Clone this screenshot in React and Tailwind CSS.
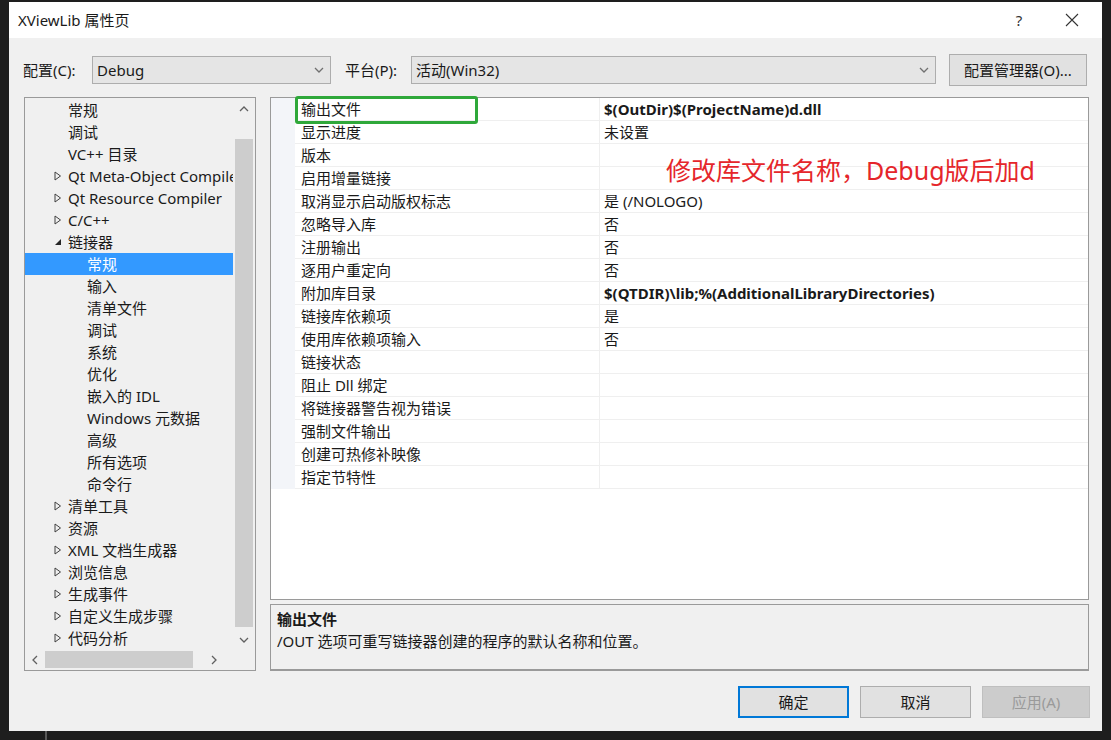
import React from 'react';

const font = { fontFamily: '"Noto Sans", "Noto Sans CJK SC", sans-serif' };

const treeRows = [
  { t: '常规', d: 0 },
  { t: '调试', d: 0 },
  { t: 'VC++ 目录', d: 0 },
  { t: 'Qt Meta-Object Compiler', d: 0, arrow: 'closed' },
  { t: 'Qt Resource Compiler', d: 0, arrow: 'closed' },
  { t: 'C/C++', d: 0, arrow: 'closed' },
  { t: '链接器', d: 0, arrow: 'open' },
  { t: '常规', d: 1, sel: true },
  { t: '输入', d: 1 },
  { t: '清单文件', d: 1 },
  { t: '调试', d: 1 },
  { t: '系统', d: 1 },
  { t: '优化', d: 1 },
  { t: '嵌入的 IDL', d: 1 },
  { t: 'Windows 元数据', d: 1 },
  { t: '高级', d: 1 },
  { t: '所有选项', d: 1 },
  { t: '命令行', d: 1 },
  { t: '清单工具', d: 0, arrow: 'closed' },
  { t: '资源', d: 0, arrow: 'closed' },
  { t: 'XML 文档生成器', d: 0, arrow: 'closed' },
  { t: '浏览信息', d: 0, arrow: 'closed' },
  { t: '生成事件', d: 0, arrow: 'closed' },
  { t: '自定义生成步骤', d: 0, arrow: 'closed' },
  { t: '代码分析', d: 0, arrow: 'closed' },
];

const props = [
  ['输出文件', '$(OutDir)$(ProjectName)d.dll', true],
  ['显示进度', '未设置'],
  ['版本', ''],
  ['启用增量链接', ''],
  ['取消显示启动版权标志', '是 (/NOLOGO)'],
  ['忽略导入库', '否'],
  ['注册输出', '否'],
  ['逐用户重定向', '否'],
  ['附加库目录', '$(QTDIR)\\lib;%(AdditionalLibraryDirectories)', true],
  ['链接库依赖项', '是'],
  ['使用库依赖项输入', '否'],
  ['链接状态', ''],
  ['阻止 Dll 绑定', ''],
  ['将链接器警告视为错误', ''],
  ['强制文件输出', ''],
  ['创建可热修补映像', ''],
  ['指定节特性', ''],
];

function Chevron({ dir = 'down', color = '#606060' }) {
  const d = {
    down: 'M1 1 L5 5 L9 1',
    up: 'M1 5 L5 1 L9 5',
    left: 'M5 1 L1 5 L5 9',
    right: 'M1 1 L5 5 L1 9',
  }[dir];
  const w = dir === 'left' || dir === 'right' ? 6 : 10;
  const h = dir === 'left' || dir === 'right' ? 10 : 6;
  return (
    <svg width={w} height={h} viewBox={`0 0 ${w} ${h}`} fill="none">
      <path d={d} stroke={color} strokeWidth="1.3" />
    </svg>
  );
}

function Arrow({ kind }) {
  if (kind === 'open') {
    return (
      <svg width="8" height="8" viewBox="0 0 8 8">
        <path d="M7 1 L7 7 L1 7 Z" fill="#262626" />
      </svg>
    );
  }
  return (
    <svg width="8" height="10" viewBox="0 0 8 10" fill="none">
      <path d="M1 1 L6.5 5 L1 9 Z" stroke="#404040" strokeWidth="1" />
    </svg>
  );
}

function Combo({ text, w }) {
  return (
    <div className={`h-[28px] ${w} bg-[#e5e5e5] border border-[#adadad] flex items-center justify-between pl-[4px] pr-[6px]`}>
      <span className="text-[15px] text-[#1a1a1a]">{text}</span>
      <Chevron dir="down" color="#707070" />
    </div>
  );
}

export default function App() {
  return (
    <div className="w-[1111px] h-[740px] bg-[#1e1e1e] overflow-hidden pt-[2px] pl-[9px]" style={font}>
      <div className="w-[1093px] h-[729px] bg-[#f0f0f0] flex flex-col">
        {/* title bar */}
        <div className="h-[36px] bg-white flex items-center pl-[9px] shrink-0">
          <span className="text-[15px] text-[#1a1a1a] flex-1">XViewLib 属性页</span>
          <span className="text-[15px] text-[#333] w-[20px] text-center mr-[36px]">?</span>
          <svg width="14" height="14" viewBox="0 0 14 14" className="mr-[23px]">
            <path d="M1 1 L13 13 M13 1 L1 13" stroke="#333" strokeWidth="1.1" />
          </svg>
        </div>

        {/* config row */}
        <div className="flex items-center mt-[16px] h-[32px] pl-[14px] shrink-0">
          <span className="text-[15px] text-[#1a1a1a] w-[69px]">配置(C):</span>
          <Combo text="Debug" w="w-[239px]" />
          <span className="text-[15px] text-[#1a1a1a] ml-[14px] w-[66px]">平台(P):</span>
          <Combo text="活动(Win32)" w="w-[525px]" />
          <div className="ml-[13px] w-[138px] h-[32px] bg-[#e1e1e1] border border-[#adadad] flex items-center justify-center text-[15px] text-[#1a1a1a]">
            配置管理器(O)...
          </div>
        </div>

        {/* main */}
        <div className="flex mt-[11px] pl-[15px] shrink-0">
          {/* tree */}
          <div className="w-[232px] h-[574px] border border-[#9a9a9a] bg-[#f0f0f0] flex flex-col">
            <div className="flex flex-1 min-h-0">
              <div className="w-[208px] overflow-hidden pt-[1px]">
                {treeRows.map((r, i) => (
                  <div
                    key={i}
                    className={`h-[22px] flex items-center whitespace-nowrap text-[15px] ${r.sel ? 'bg-[#3399ff] text-white' : 'text-[#1a1a1a]'}`}
                  >
                    <span className={`${r.d === 1 ? 'w-[62px]' : 'w-[43px]'} shrink-0 flex justify-end pr-[6px]`}>
                      {r.arrow && r.d === 0 ? <span className="flex items-center"><Arrow kind={r.arrow} /></span> : null}
                    </span>
                    <span>{r.t}</span>
                  </div>
                ))}
              </div>
              <div className="w-[22px] flex flex-col items-center bg-[#f0f0f0]">
                <div className="h-[22px] flex items-center justify-center"><Chevron dir="up" /></div>
                <div className="w-[18px] mt-[19px] h-[488px] bg-[#cdcdcd]" />
                <div className="flex-1 flex items-end justify-center pb-[6px]"><Chevron dir="down" /></div>
              </div>
            </div>
            <div className="h-[21px] flex items-center">
              <div className="w-[20px] flex justify-center"><Chevron dir="left" /></div>
              <div className="w-[148px] h-[17px] bg-[#cdcdcd]" />
              <div className="flex-1 flex justify-center pr-[24px] pl-[4px]"><Chevron dir="right" /></div>
            </div>
          </div>

          {/* right column */}
          <div className="ml-[14px] w-[819px] flex flex-col gap-[4px]">
            <div className="relative h-[503px] border border-[#9a9a9a] bg-white">
              {props.map(([n, v, b], i) => (
                <div key={i} className="flex h-[23px] text-[15px] text-[#1a1a1a]">
                  <div className="w-[24px] bg-[#f3f5f9] shrink-0" />
                  <div className="w-[305px] border-b border-r border-[#efefef] pl-[6px] flex items-center">{n}</div>
                  <div className={`flex-1 border-b border-[#efefef] pl-[4px] flex items-center ${b ? 'font-bold' : ''}`}>{v}</div>
                </div>
              ))}
              <div className="absolute left-[24px] top-[-2px] w-[183px] h-[28px] border-[3px] border-[#2fa83a] rounded-[3px]" />
              <div className="absolute left-[395px] top-[54px] text-[25px] text-[#e5262b] whitespace-nowrap">
                修改库文件名称，Debug版后加d
              </div>
            </div>
            <div className="h-[67px] border border-[#9a9a9a] border-b-[2px] bg-[#f0f0f0] pl-[6px] pt-[3px] text-[15px] text-[#1a1a1a] leading-[22px]">
              <div className="font-bold">输出文件</div>
              <div>/OUT 选项可重写链接器创建的程序的默认名称和位置。</div>
            </div>
          </div>
        </div>

        {/* buttons */}
        <div className="flex justify-end mt-[15px] pr-[12px] gap-[11px] shrink-0">
          <div className="w-[111px] h-[32px] bg-[#e1e1e1] border-2 border-[#0078d7] flex items-center justify-center text-[15px] text-[#1a1a1a]">确定</div>
          <div className="w-[111px] h-[32px] bg-[#e1e1e1] border border-[#adadad] flex items-center justify-center text-[15px] text-[#1a1a1a]">取消</div>
          <div className="w-[108px] h-[32px] bg-[#cccccc] border border-[#bfbfbf] flex items-center justify-center text-[15px] text-[#9a9a9a]">应用(A)</div>
        </div>
      </div>
      <div className="pl-[36px]"><div className="w-[2px] h-[10px] bg-[#5a5a5a]" /></div>
    </div>
  );
}
